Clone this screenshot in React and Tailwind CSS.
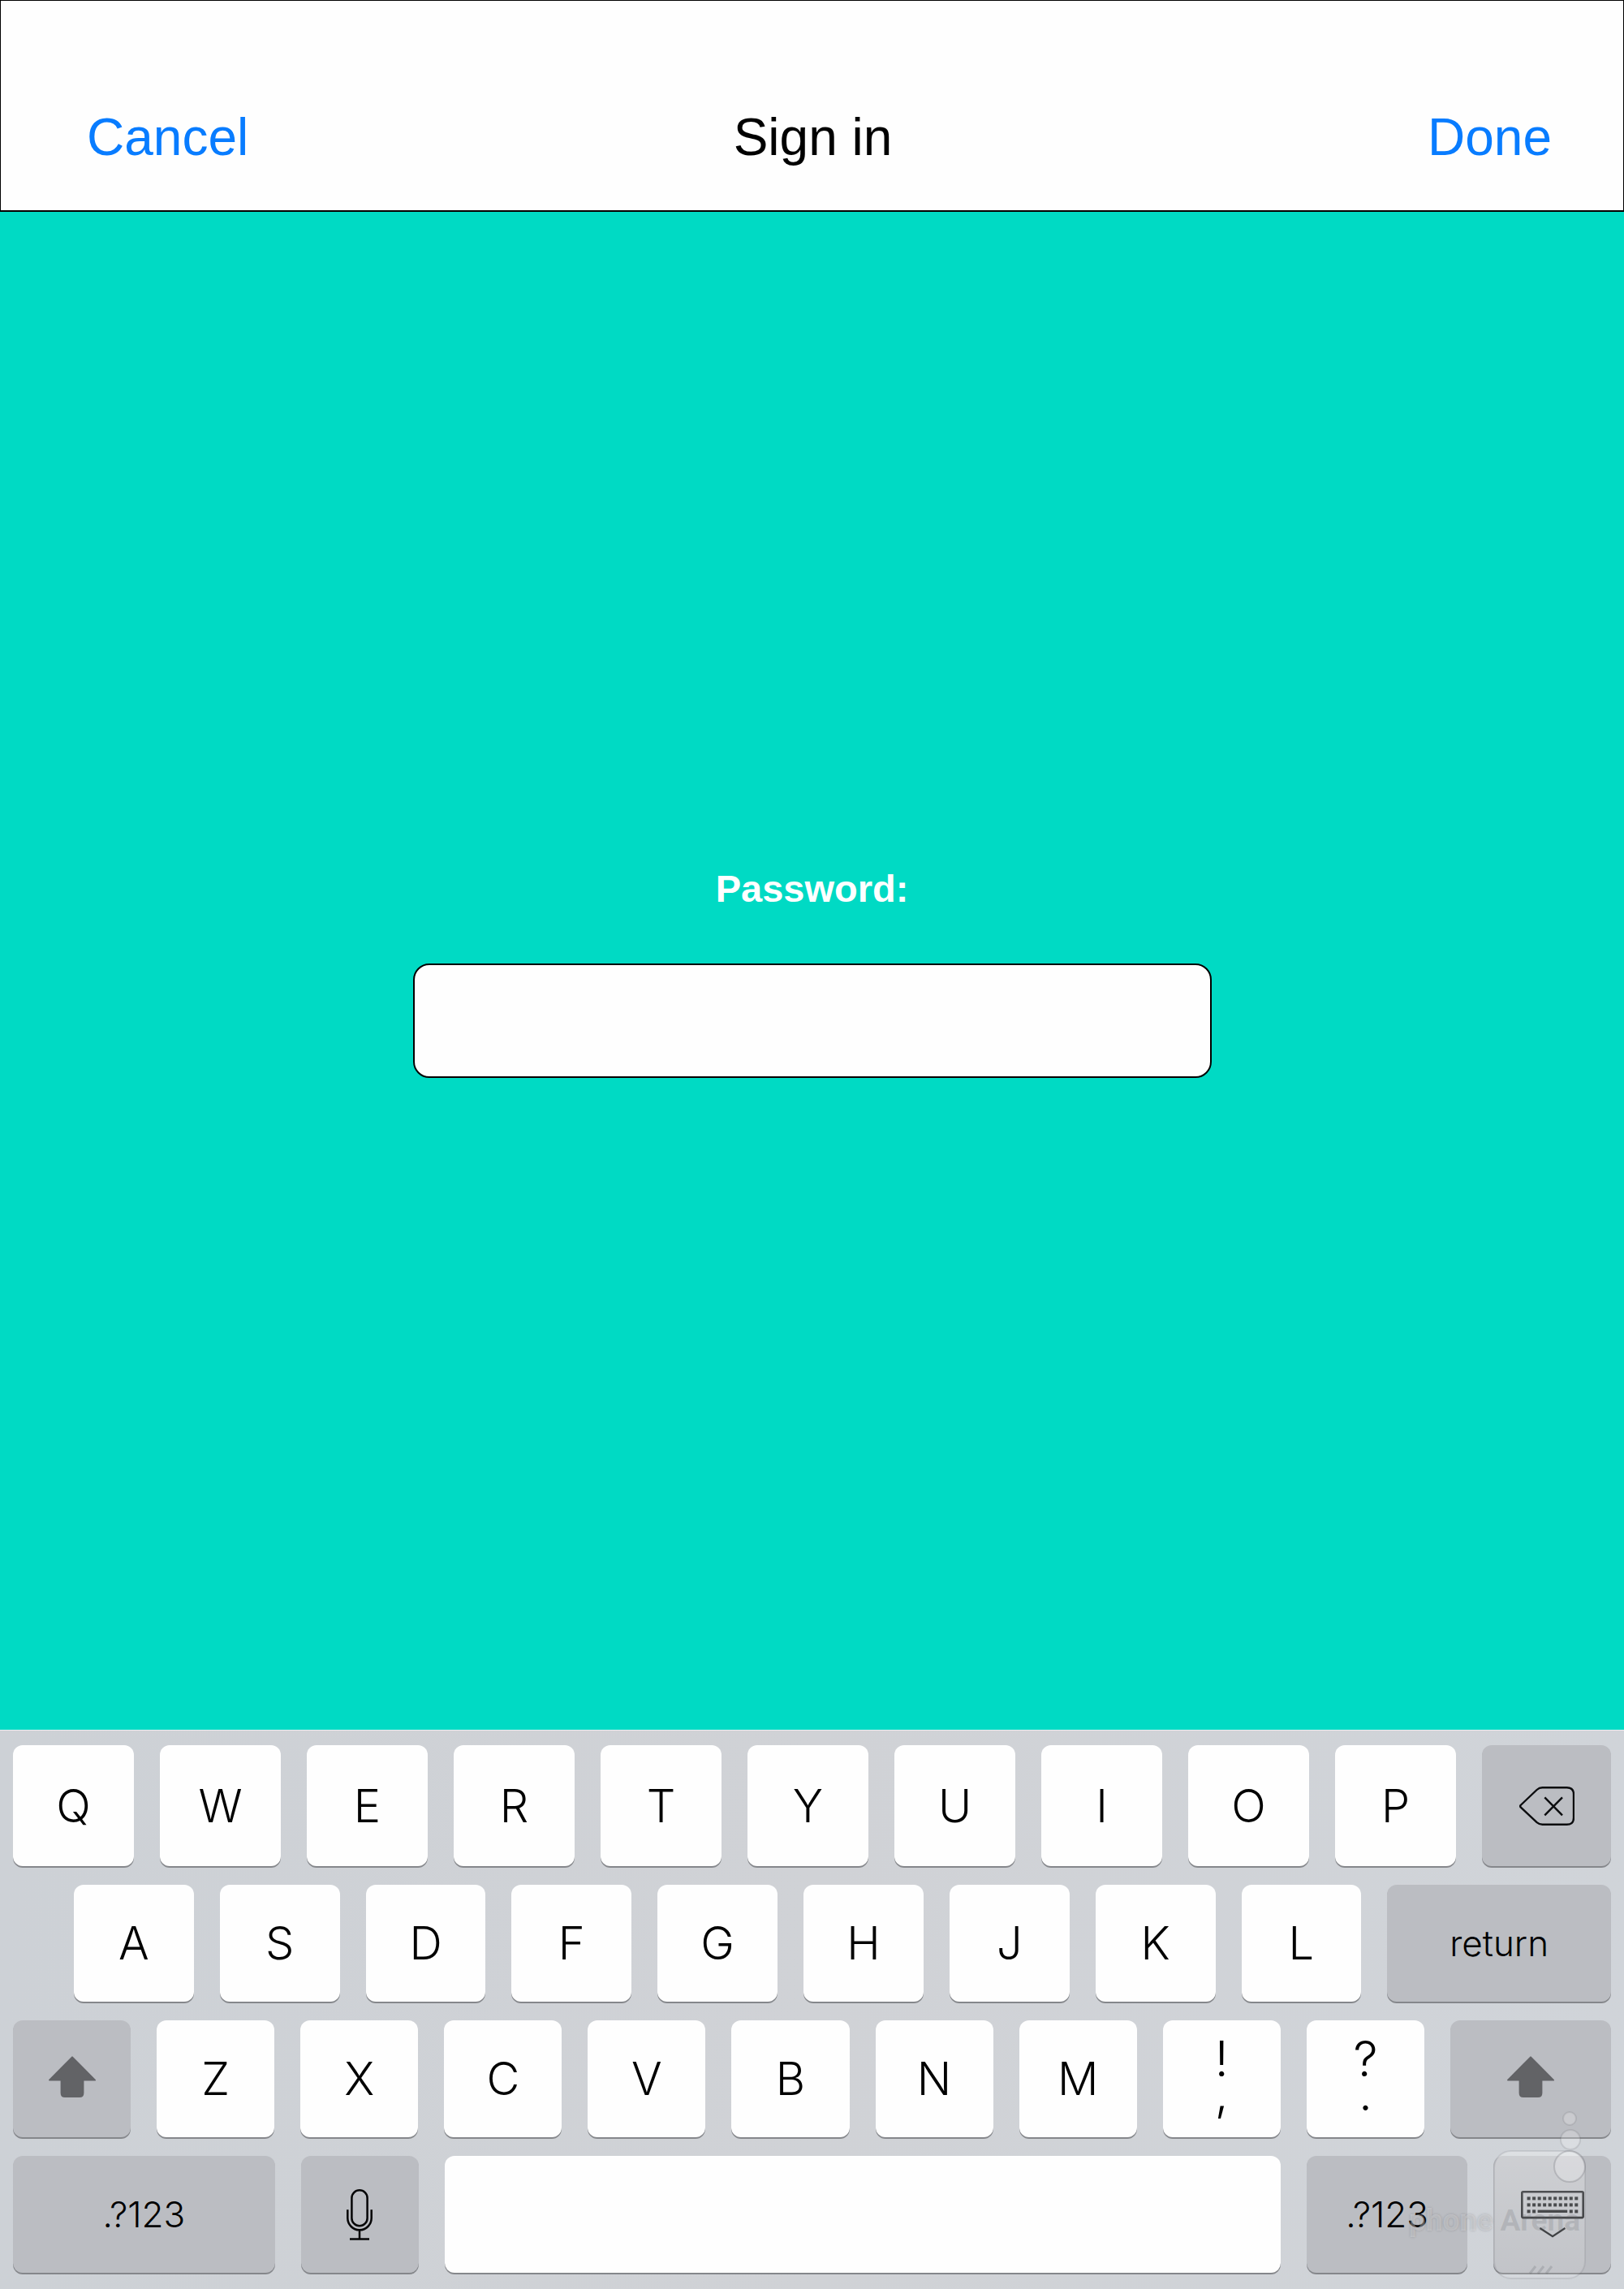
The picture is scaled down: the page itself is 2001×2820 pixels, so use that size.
const WHITE_KEY = "bg-[#fefefe]";
const GRAY_KEY = "bg-[#bbbdc2]";

function Key({ children, label, grow = "flex-[148]", tone = WHITE_KEY, size = "text-[56px]" }) {
  return (
    <button
      type="button"
      aria-label={label}
      className={`${grow} ${tone} ${size} flex min-w-0 flex-col items-center justify-center rounded-xl leading-none text-black shadow-[0_2px_0_#85878b]`}
    >
      {children}
    </button>
  );
}

function PunctuationKey({ upper, lower }) {
  return (
    <Key label={`${upper} ${lower}`} grow="flex-[145]" size="text-[60px]">
      <span className="pb-2 leading-[42px] whitespace-pre-line">{`${upper}\n${lower}`}</span>
    </Key>
  );
}

function BackspaceIcon() {
  return (
    <svg width="68" height="48" viewBox="0 0 68 48" fill="none" stroke="#0b0c0e" strokeWidth="2.4" strokeLinejoin="round">
      <path d="M1.6 25.4Q.6 24.2 1.6 23L21.6 4Q24.6 1.2 28.4 1.2H58.6Q67 1.2 67 9.6V38.4Q67 46.8 58.6 46.8H28.4Q24.6 46.8 21.6 44.2Z" />
      <path d="M31.3 13.3 53 35.3M53 13.3 31.3 35.3" />
    </svg>
  );
}

function ShiftIcon() {
  return (
    <svg width="58" height="57" viewBox="0 0 58 57" fill="#626366" stroke="#626366" strokeWidth="2" strokeLinejoin="round">
      <path d="M29 1.4 57 29.6H42.4V45.5Q42.4 50 38 50H20Q15.6 50 15.6 45.5V29.6H1Z" />
    </svg>
  );
}

function MicIcon() {
  return (
    <svg width="32" height="63" viewBox="0 0 32 63" fill="none" stroke="#060607" strokeWidth="2.5">
      <rect x="6.4" y="1.3" width="19.2" height="44" rx="9.6" />
      <path d="M1.3 25.3V35.6A14.7 14.7 0 0 0 30.7 35.6V25.3M16 50.4V61.6M4 61.6H28" />
    </svg>
  );
}

const COLUMNS = [0, 1, 2, 3, 4, 5, 6, 7, 8, 9];

function HideKeyboardIcon() {
  return (
    <svg width="78" height="58" viewBox="0 0 78 58" fill="none" stroke="#1b1d20">
      <rect x="1.3" y="1.3" width="75.4" height="31.8" rx="1.5" strokeWidth="2.6" />
      <g fill="#1b1d20" stroke="none">
        {COLUMNS.map((c) => (
          <g key={c}>
            <rect x={7.6 + c * 6.52} y="7.4" width="4" height="4" />
            <rect x={7.6 + c * 6.52} y="15.4" width="4" height="4" />
            {(c < 2 || c > 7) && <rect x={7.6 + c * 6.52} y="23.4" width="4" height="4" />}
          </g>
        ))}
        <rect x="20.6" y="23.6" width="36.6" height="3.4" />
      </g>
      <path d="M23.4 46 39 56.2 54.4 46" strokeWidth="2.2" />
    </svg>
  );
}

function Watermark() {
  return (
    <div aria-hidden="true" className="pointer-events-none absolute right-[41px] bottom-2">
      <svg width="230" height="216" viewBox="1730 2596 230 216" fill="none">
        <defs>
          <linearGradient id="glass" x1="0" y1="0" x2="0" y2="1">
            <stop offset="0" stopColor="#fff" stopOpacity=".28" />
            <stop offset="1" stopColor="#fff" stopOpacity=".1" />
          </linearGradient>
        </defs>
        <rect x="1841" y="2650" width="112" height="157" rx="21" fill="url(#glass)" stroke="#5c5e63" strokeOpacity=".14" strokeWidth="2" />
        <g fill="#fff" fillOpacity=".22" stroke="#5c5e63" strokeOpacity=".16" strokeWidth="2">
          <circle cx="1934" cy="2610" r="8" />
          <circle cx="1935" cy="2636" r="12" />
          <circle cx="1934" cy="2669" r="19" strokeOpacity=".24" />
        </g>
        <path d="M1885 2801 1892 2792M1895 2801 1902 2792M1905 2801 1912 2792" stroke="#5c5e63" strokeOpacity=".22" strokeWidth="3" />
      </svg>
      <p className="absolute right-[13px] bottom-[54px] font-['Roboto',sans-serif] text-[37px] leading-[44px] font-bold whitespace-nowrap">
        <span className="text-white/30 [text-shadow:0_0_3px_rgb(80_82_88_/_0.32)]">phone</span>{" "}
        <span className="text-[#5c5e63]/20">Arena</span>
      </p>
    </div>
  );
}

export default function App() {
  return (
    <div className="flex min-h-screen flex-col bg-[#00dac4] font-['Liberation_Sans',Arial,sans-serif]">
      <header className="grid grid-cols-3 items-center border border-b-2 border-black bg-[#fefefe] pt-[136px] pr-[88px] pb-[58px] pl-[106px] text-[64px] leading-[64px]">
        <button type="button" className="justify-self-start text-[#087cff]">Cancel</button>
        <h1 className="-ml-4 justify-self-center text-black">Sign in</h1>
        <button type="button" className="justify-self-end text-[#087cff]">Done</button>
      </header>

      <main className="flex flex-1 flex-col items-center justify-center gap-16 pt-0.5">
        <label htmlFor="password" className="text-[47px] leading-[56px] font-bold text-white">Password:</label>
        <input
          id="password"
          type="password"
          className="h-[141px] w-1/2 max-w-[984px] rounded-[20px] border-2 border-black bg-[#fefefe] px-8 text-[47px] outline-none"
        />
      </main>

      <section
        aria-label="Keyboard"
        className="relative flex flex-col gap-[23px] border-t border-[#eceef0] bg-linear-to-r from-[#cdd1d6] via-[#d0d2d6] to-[#d0d4d9] px-4 pt-[18px] pb-5 font-['Inter',sans-serif] font-light"
      >
        <div className="flex h-[149px] gap-8">
          {[..."QWERTYUIOP"].map((k) => (
            <Key key={k} grow="flex-[149]">{k}</Key>
          ))}
          <Key label="Backspace" grow="flex-[159]" tone={GRAY_KEY}><BackspaceIcon /></Key>
        </div>
        <div className="flex h-36 gap-8 pl-[75px]">
          {[..."ASDFGHJKL"].map((k) => (
            <Key key={k}>{k}</Key>
          ))}
          <Key grow="flex-[276]" tone={GRAY_KEY} size="text-[44px]">return</Key>
        </div>
        <div className="flex h-36 gap-8">
          <Key label="Shift" grow="flex-[145]" tone={GRAY_KEY}><ShiftIcon /></Key>
          {[..."ZXCVBNM"].map((k) => (
            <Key key={k} grow="flex-[145]">{k}</Key>
          ))}
          <PunctuationKey upper="!" lower="," />
          <PunctuationKey upper="?" lower="." />
          <Key label="Right shift" grow="flex-[198]" tone={GRAY_KEY}><ShiftIcon /></Key>
        </div>
        <div className="flex h-36 gap-8">
          <Key grow="flex-[323]" tone={GRAY_KEY} size="text-[44px]">.?123</Key>
          <Key label="Dictate" grow="flex-[145]" tone={GRAY_KEY}><MicIcon /></Key>
          <Key label="Space" grow="flex-[1031]" />
          <Key grow="flex-[198]" tone={GRAY_KEY} size="text-[44px]">.?123</Key>
          <Key label="Hide keyboard" grow="flex-[145]" tone={GRAY_KEY}><HideKeyboardIcon /></Key>
        </div>
        <Watermark />
      </section>
    </div>
  );
}
